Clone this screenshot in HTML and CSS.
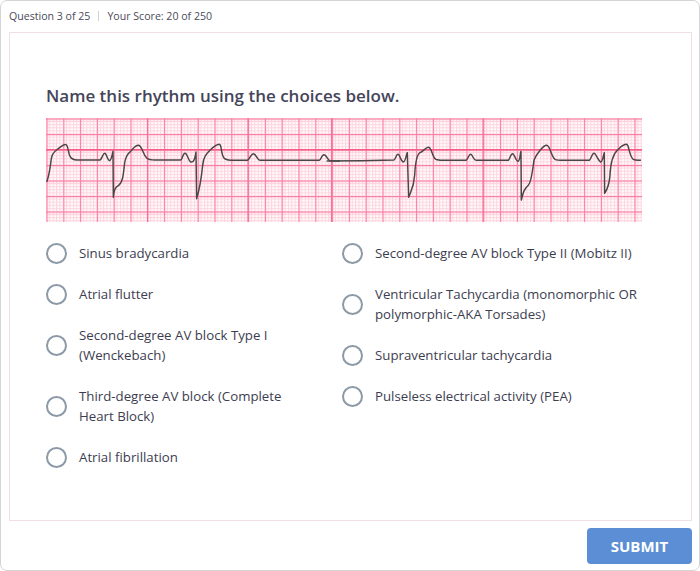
FILE: index.html
```html
<!DOCTYPE html>
<html lang="en">
<head>
<meta charset="utf-8">
<title>Quiz</title>
<link rel="stylesheet" href="styles.css">
</head>
<body>
<div class="frame">
  <header class="status">
    <span>Question 3 of 25</span><span class="sep"></span><span>Your Score: 20 of 250</span>
  </header>
  <main class="card">
    <h1 class="question">Name this rhythm using the choices below.</h1>
    <svg class="strip" viewBox="46 118 596 104" width="596" height="104" role="img" aria-label="ECG rhythm strip">
      <defs>
        <pattern id="minor" x="46" y="118" width="3.36" height="3.1" patternUnits="userSpaceOnUse">
          <rect width="3.36" height="3.1" fill="#fffbfc"/>
          <path d="M0 .5H3.36M.5 0V3.1" stroke="#fdd5de" stroke-width="1" fill="none"/>
        </pattern>
        <pattern id="major" x="46.5" y="134" width="16.8" height="15.5" patternUnits="userSpaceOnUse">
          <path d="M0 .5H16.8M.5 0V15.5" stroke="#fb7fa2" stroke-width="1.2" fill="none"/>
        </pattern>
      </defs>
      <rect x="46" y="118" width="596" height="104" fill="url(#minor)"/>
      <rect x="46" y="118" width="596" height="104" fill="url(#major)"/>
      <path d="M46 149.8H642" stroke="#f95c88" stroke-width="1.5" fill="none"/>
      <path d="M147.5 118V222M248 118V222M331.5 118V222M483 118V222" stroke="#f96f96" stroke-width="1.2" fill="none"/>
      <g transform="translate(40 112) scale(.3333)" fill="none" stroke="#4a4648" stroke-width="4.4" stroke-linejoin="round">
        <path d="M20 210C28 190 30 170 34 140C36 122 45 118 55 110C62 105 70 96 78 98C84 100 84 115 88 128C92 140 100 144 112 144L180 144C186 142 188 124 194 124C200 124 202 144 208 146C214 146 216 130 219 118L220 256C222 232 226 226 236 220C248 210 250 190 253 160C255 135 262 125 272 118C280 110 286 99 296 100C306 102 308 125 320 138C326 144 335 144 345 144L422 144C428 142 428 124 435 124C442 124 444 144 452 150C460 152 464 145 468 120L470 260C476 240 484 200 488 160C490 135 500 125 510 115C520 105 528 97 538 97C546 98 542 125 552 138C558 146 570 144 580 145L622 145C630 142 632 125 640 125C648 125 650 142 660 145L838 145C844 144 844 128 852 128C860 128 862 144 870 146L900 147"/>
      </g>
      <g transform="translate(340 112) scale(.3333)" fill="none" stroke="#4a4648" stroke-width="4.4" stroke-linejoin="round">
        <path d="M-40 147L65 146L162 144C168 140 168 127 174 127C180 127 182 148 190 150C196 150 198 130 202 122L206 256C212 240 222 225 224 190C226 150 230 128 240 122C250 118 258 105 266 106C276 108 276 135 288 142C296 146 310 144 320 145L378 145C384 142 386 127 392 127C398 127 400 145 408 145L505 145C510 140 512 125 518 125C524 125 526 146 534 148C540 148 540 128 543 118L544 264C550 240 552 232 565 220C575 210 578 170 582 145C590 125 610 100 620 100C630 100 632 130 645 142C652 146 670 145 680 145L748 145C754 140 756 124 762 124C768 124 774 146 782 150C788 150 790 130 793 122L794 244C800 235 808 215 810 190C812 150 818 128 832 115C842 105 848 97 860 97C868 98 866 130 880 142C886 146 895 144 903 145"/>
      </g>
    </svg>
    <div class="choices">
      <div class="column column-left">
        <label class="choice"><input type="radio" name="rhythm"><span>Sinus bradycardia</span></label>
        <label class="choice"><input type="radio" name="rhythm"><span>Atrial flutter</span></label>
        <label class="choice"><input type="radio" name="rhythm"><span>Second-degree AV block Type I (Wenckebach)</span></label>
        <label class="choice"><input type="radio" name="rhythm"><span>Third-degree AV block (Complete Heart Block)</span></label>
        <label class="choice"><input type="radio" name="rhythm"><span>Atrial fibrillation</span></label>
      </div>
      <div class="column">
        <label class="choice"><input type="radio" name="rhythm"><span>Second-degree AV block Type II (Mobitz II)</span></label>
        <label class="choice"><input type="radio" name="rhythm"><span>Ventricular Tachycardia (monomorphic OR polymorphic-AKA Torsades)</span></label>
        <label class="choice"><input type="radio" name="rhythm"><span>Supraventricular tachycardia</span></label>
        <label class="choice"><input type="radio" name="rhythm"><span>Pulseless electrical activity (PEA)</span></label>
      </div>
    </div>
  </main>
  <footer class="actions">
    <button class="submit" type="button">SUBMIT</button>
  </footer>
</div>
</body>
</html>
```
FILE: styles.css
```css
* { box-sizing: border-box; }
html, body { margin: 0; padding: 0; background: #fff; }
body { font-family: "Open Sans", "Liberation Sans", sans-serif; color: #45455a; }
.frame {
  width: 700px;
  height: 571px;
  border: 1px solid #d4d4d8;
  border-radius: 7px;
  display: flex;
  flex-direction: column;
  padding: 0 7px 6px 8px;
  overflow: hidden;
}
.status {
  height: 31px;
  display: flex;
  align-items: center;
  font-size: 10.6px;
  color: #4a4a58;
}
.sep { width: 1px; height: 10px; background: #d0d0d4; margin: 0 8px; }
.card {
  height: 490px;
  border: 1px solid #f0dfe5;
  padding: 0 36px;
  background: #fff;
}
.question {
  margin: 50px 0 0;
  font-size: 17px;
  line-height: 26px;
  font-weight: 600;
  color: #45455a;
}
.strip { display: block; margin-top: 9px; }
.choices { display: grid; grid-template-columns: 296px 300px; margin-top: 11px; }
.column { display: flex; flex-direction: column; }
.column-left .choice span { max-width: 222px; }
.choice {
  display: flex;
  align-items: center;
  gap: 12px;
  padding: 10px 0;
  font-size: 13.25px;
  line-height: 20.5px;
  color: #3d3d50;
}
.choice input {
  appearance: none;
  flex: none;
  width: 21px;
  height: 21px;
  margin: 0;
  border: 2px solid #8c99a6;
  border-radius: 50%;
  background: #fff;
}
.actions { display: flex; justify-content: flex-end; padding-top: 7px; }
.submit {
  width: 105px;
  height: 36px;
  border: 0;
  border-radius: 4px;
  background: #5b8ed4;
  color: #fff;
  font: 700 15px "Open Sans", "Liberation Sans", sans-serif;
}
```
